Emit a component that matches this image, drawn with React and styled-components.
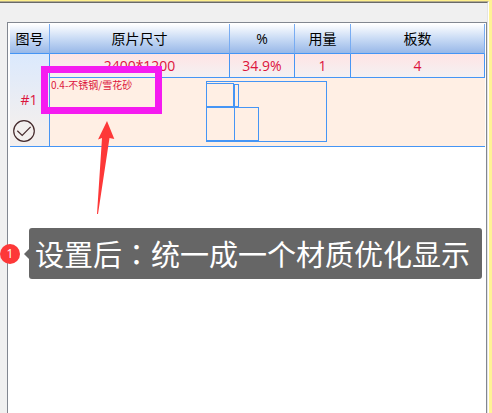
import React from "react";
import styled, { createGlobalStyle } from "styled-components";

const GlobalStyle = createGlobalStyle`
  * {
    box-sizing: border-box;
  }
  body {
    margin: 0;
    background-color: #f0f0f0;
    font-family: "Open Sans", "Noto Sans CJK SC", sans-serif;
  }
`;

const Page = styled.main`
  position: relative;
  display: flex;
  min-height: 100vh;
  overflow: hidden;
  border-top: 1px solid #fff08c;
  border-right: 3px solid #fff394;
`;

const WindowFrame = styled.div`
  flex: 1;
  display: flex;
  border-top: 1px solid #b5ad8a;
  border-right: 1px solid #ffffff;
`;

const WindowBody = styled.div`
  flex: 1;
  display: flex;
  padding: 19px 0 0 7px;
  border-top: 1px solid #696969;
  border-right: 1px solid #e3e3e3;
`;

const Panel = styled.section`
  flex: 1;
  padding: 1px 1px 0 2px;
  background-color: #ffffff;
  border: 1px solid #828790;
  border-bottom: 0;
`;

const SheetTable = styled.table`
  width: 100%;
  table-layout: fixed;
  border-collapse: separate;
  border-spacing: 0;
  font-size: 14px;
  line-height: 20px;
`;

const Column = styled.col`
  width: ${props => props.$width || 'auto'};
`;

const HeaderCell = styled.th`
  height: 30px;
  padding: 0;
  color: #000000;
  font-weight: 400;
  text-align: center;
  background: linear-gradient(#ffffff, #c9dbf5 50%, #98b8e8);
  border-right: 1px solid #78acf2;
  border-bottom: 1px solid #4595f5;
`;

const ValueCell = styled.td`
  height: 24px;
  padding: 0;
  color: #dc143c;
  text-align: center;
  background: linear-gradient(#ffe4e4, #f3f1f3);
  border-right: 1px solid #4595f5;
  border-bottom: 1px solid #4595f5;
`;

const SheetCell = styled.th`
  padding: 0 0 4px 3px;
  color: #dc143c;
  font-weight: 400;
  vertical-align: bottom;
  background: linear-gradient(#dbe9fd, #f3efee 80%);
  border-right: 1px solid #4595f5;
  border-bottom: 1px solid #4595f5;
`;

const SheetInfo = styled.div`
  display: flex;
  flex-direction: column;
  gap: 10px;
`;

const SheetNumber = styled.span`
  padding-right: 4px;
  text-align: center;
`;

const CheckButton = styled.button`
  display: block;
  width: 22px;
  height: 22px;
  padding: 0;
  background: none;
  border: 0;

  svg {
    display: block;
  }
`;

const LayoutCell = styled.td`
  height: 69px;
  padding: 0;
  vertical-align: top;
  background-color: #ffefe4;
  border-bottom: 1px solid #4595f5;
`;

const LayoutContent = styled.div`
  display: flex;
`;

const Material = styled.span`
  width: 156px;
  padding-left: 1px;
  color: #dc143c;
  font-family: "Noto Sans CJK SC", sans-serif;
  font-size: 10px;
  line-height: 14px;
`;

const SheetDrawing = styled.svg`
  display: block;
  margin-top: 3px;
`;

const HighlightBox = styled.div`
  position: absolute;
  top: 65px;
  left: 41px;
  width: 121px;
  height: 48px;
  border: 7px solid #f51bf0;
`;

const Arrow = styled.svg`
  position: absolute;
  top: 120px;
  left: 96px;
`;

const Note = styled.div`
  position: absolute;
  top: 227px;
  left: 0;
  right: 7px;
  display: flex;
  align-items: center;
`;

const NoteBadge = styled.span`
  width: 20px;
  height: 20px;
  color: #ffffff;
  font-size: 12px;
  line-height: 20px;
  text-align: center;
  background-color: #fd3838;
  border-radius: 50%;
`;

const NoteTip = styled.span`
  margin-left: 4px;
  border: 5px solid transparent;
  border-left: 0;
  border-right-color: #666666;
`;

const NoteText = styled.p`
  flex: 1;
  margin: 0;
  padding: 3px 6px 4px;
  color: #ffffff;
  font-family: "Noto Sans CJK SC", sans-serif;
  font-size: 29px;
  font-weight: 400;
  line-height: 44px;
  white-space: nowrap;
  background-color: #666666;
  border-radius: 3px;
`;

const Colon = styled.span`
  font-family: "Noto Sans CJK TC", sans-serif;
`;

const columns = [
  { title: '图号', width: '40px' },
  { title: '原片尺寸', width: '180px' },
  { title: '%', width: '65px' },
  { title: '用量', width: '56px' },
  { title: '板数' },
]

const sheet = {
  number: '#1',
  values: ['2400*1200', '34.9%', '1', '4'],
  material: '0.4-不锈钢/雪花砂',
  width: 120,
  height: 60,
  pieces: [
    { x: 0, y: 2, width: 27, height: 23 },
    { x: 28, y: 3, width: 4, height: 22 },
    { x: 0, y: 26, width: 28, height: 33 },
    { x: 28, y: 26, width: 24, height: 33 },
  ],
}

const CuttingLayout = ({ width, height, pieces }) => (
  <SheetDrawing width={width + 1} height={height + 1} fill="none" stroke="#4595f5">
    <g transform="translate(0.5 0.5)">
      <rect width={width} height={height} />
      {pieces.map((piece, index) => <rect key={index} {...piece} />)}
    </g>
  </SheetDrawing>
)

const App = () => (
  <Page>
    <GlobalStyle />
    <WindowFrame>
      <WindowBody>
        <Panel>
          <SheetTable>
            <colgroup>
              {columns.map(column => <Column key={column.title} $width={column.width} />)}
            </colgroup>
            <thead>
              <tr>
                {columns.map(column => (
                  <HeaderCell key={column.title} scope="col">{column.title}</HeaderCell>
                ))}
              </tr>
            </thead>
            <tbody>
              <tr>
                <SheetCell rowSpan={2} scope="rowgroup">
                  <SheetInfo>
                    <SheetNumber id="sheet-number">{sheet.number}</SheetNumber>
                    <CheckButton type="button" aria-labelledby="sheet-number">
                      <svg width="22" height="22" fill="none" stroke="#452a2c" strokeWidth="1.2">
                        <circle cx="11" cy="11" r="10.3" />
                        <path d="M4.3 10.8 L9.2 15.5 L17.6 6.8" />
                      </svg>
                    </CheckButton>
                  </SheetInfo>
                </SheetCell>
                {sheet.values.map(value => <ValueCell key={value}>{value}</ValueCell>)}
              </tr>
              <tr>
                <LayoutCell colSpan={4}>
                  <LayoutContent>
                    <Material>{sheet.material}</Material>
                    <CuttingLayout
                      width={sheet.width}
                      height={sheet.height}
                      pieces={sheet.pieces}
                    />
                  </LayoutContent>
                </LayoutCell>
              </tr>
            </tbody>
          </SheetTable>
        </Panel>
      </WindowBody>
    </WindowFrame>
    <HighlightBox />
    <Arrow width="20" height="94" fill="#fd3838">
      <path d="M11 0 L18.3 18 L13.5 17 L2 93 L1 93 L6 17 L2 18.5 Z" />
    </Arrow>
    <Note>
      <NoteBadge>1</NoteBadge>
      <NoteTip />
      <NoteText>设置后<Colon>：</Colon>统一成一个材质优化显示</NoteText>
    </Note>
  </Page>
)

export default App;
